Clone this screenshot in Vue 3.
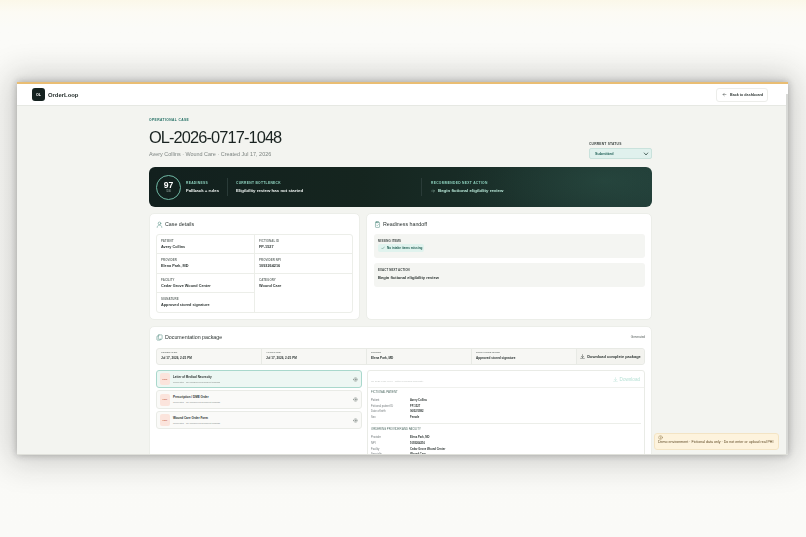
<template>
  <div class="stage">
    <div class="window">
      <header class="topbar">
        <div class="brand">
          <span class="logo">OL</span>
          <span class="brand-name">OrderLoop</span>
        </div>
        <button class="back-btn">
          <svg viewBox="0 0 24 24" class="ico-back"><path d="M19 12H5M11 6l-6 6 6 6" /></svg>
          Back to dashboard
        </button>
      </header>

      <main class="content">
        <div class="page-head">
          <div>
            <div class="eyebrow">OPERATIONAL CASE</div>
            <h1>OL-2026-0717-1048</h1>
            <p class="sub">Avery Collins · Wound Care · Created Jul 17, 2026</p>
          </div>
          <div class="status">
            <div class="status-label">CURRENT STATUS</div>
            <div class="status-select">
              <span>Submitted</span>
              <svg viewBox="0 0 24 24"><path d="M5 8l7 8 7-8" /></svg>
            </div>
          </div>
        </div>

        <section class="banner">
          <div class="score"><b>97</b><small>/100</small></div>
          <div class="b-col b-first">
            <div class="b-label">READINESS</div>
            <div class="b-value">Fallback + rules</div>
          </div>
          <div class="b-col b-mid">
            <div class="b-label">CURRENT BOTTLENECK</div>
            <div class="b-value">Eligibility review has not started</div>
          </div>
          <div class="b-col b-next">
            <div class="b-label">RECOMMENDED NEXT ACTION</div>
            <div class="b-value mint">
              <svg viewBox="0 0 24 24"><path d="M3 12h18M14 5l7 7-7 7" /></svg>
              Begin fictional eligibility review
            </div>
          </div>
        </section>

        <div class="two-col">
          <section class="card case-card">
            <h2>
              <svg viewBox="0 0 24 24" class="h-ico"><circle cx="12" cy="8" r="4.5" /><path d="M4 22c0-5 3.5-8 8-8s8 3 8 8" /></svg>
              Case details
            </h2>
            <div class="fields">
              <div v-for="f in fields" :key="f.label" class="field" :class="{ tall: f.tall }">
                <div class="f-label">{{ f.label }}</div>
                <div class="f-value">{{ f.value }}</div>
              </div>
            </div>
          </section>

          <section class="card handoff-card">
            <h2>
              <svg viewBox="0 0 24 24" class="h-ico"><rect x="5" y="4" width="14" height="18" rx="2" /><path d="M9 2h6v4H9zM9 14l2 2 4-4" /></svg>
              Readiness handoff
            </h2>
            <div class="hand-box">
              <div class="f-label dark">MISSING ITEMS</div>
              <div class="chip">
                <svg viewBox="0 0 24 24"><path d="M4 13l5 5L20 6" /></svg>
                No intake items missing
              </div>
            </div>
            <div class="hand-box">
              <div class="f-label dark">EXACT NEXT ACTION</div>
              <div class="f-value next">Begin fictional eligibility review</div>
            </div>
          </section>
        </div>

        <section class="card package">
          <div class="pack-head">
            <h2>
              <svg viewBox="0 0 24 24" class="h-ico"><rect x="8" y="3" width="13" height="15" rx="2" /><path d="M8 7H5a2 2 0 0 0-2 2v10a2 2 0 0 0 2 2h9a2 2 0 0 0 2-2v-1" /></svg>
              Documentation package
            </h2>
            <span class="generated">Generated</span>
          </div>

          <div class="meta">
            <div v-for="m in meta" :key="m.label" class="meta-cell">
              <div class="f-label">{{ m.label }}</div>
              <div class="meta-value">{{ m.value }}</div>
            </div>
            <button class="dl-all">
              <svg viewBox="0 0 24 24"><path d="M12 3v13M6 11l6 6 6-6M3 21h18" /></svg>
              Download complete package
            </button>
          </div>

          <div class="docs">
            <div class="doc-list">
              <div v-for="(d, i) in docs" :key="d" class="doc" :class="{ active: i === 0 }">
                <span class="pdf">PDF</span>
                <div class="doc-text">
                  <div class="doc-name">{{ d }}</div>
                  <div class="doc-sub">Generated · No unresolved document findings</div>
                </div>
                <svg viewBox="0 0 24 24" class="eye"><path d="M1 12s4-8 11-8 11 8 11 8-4 8-11 8-11-8-11-8z" /><circle cx="12" cy="12" r="3" /></svg>
              </div>
            </div>

            <div class="preview">
              <div class="prev-head">
                <span class="prev-title">OL-2026-0717-1048 · Letter of Medical Necessity</span>
                <span class="prev-dl">
                  <svg viewBox="0 0 24 24"><path d="M12 3v13M6 11l6 6 6-6M3 21h18" /></svg>
                  Download
                </span>
              </div>
              <div class="prev-body">
                <div class="prev-sec">FICTIONAL PATIENT</div>
                <div v-for="r in patientRows" :key="r[0]" class="prev-row">
                  <span>{{ r[0] }}</span><b>{{ r[1] }}</b>
                </div>
                <div class="prev-rule"></div>
                <div class="prev-sec">ORDERING PROVIDER AND FACILITY</div>
                <div v-for="r in providerRows" :key="r[0]" class="prev-row">
                  <span>{{ r[0] }}</span><b>{{ r[1] }}</b>
                </div>
              </div>
            </div>
          </div>
        </section>
      </main>

      <div class="scroll-track"></div>

      <div class="toast">
        <svg viewBox="0 0 24 24"><circle cx="12" cy="12" r="9" /><path d="M12 8v5M12 16v1" /></svg>
        <div>Demo environment · Fictional data only · Do not enter or upload real PHI</div>
      </div>
    </div>
  </div>
</template>

<script setup>
const fields = [
  { label: 'PATIENT', value: 'Avery Collins' },
  { label: 'FICTIONAL ID', value: 'FP-1527' },
  { label: 'PROVIDER', value: 'Elena Park, MD' },
  { label: 'PROVIDER NPI', value: '1093264216' },
  { label: 'FACILITY', value: 'Cedar Grove Wound Center' },
  { label: 'CATEGORY', value: 'Wound Care', tall: true },
  { label: 'SIGNATURE', value: 'Approved stored signature' }
]

const meta = [
  { label: 'GENERATED', value: 'Jul 17, 2026, 2:25 PM' },
  { label: 'APPROVED', value: 'Jul 17, 2026, 2:25 PM' },
  { label: 'SIGNER', value: 'Elena Park, MD' },
  { label: 'SIGNATURE MODE', value: 'Approved stored signature' }
]

const docs = ['Letter of Medical Necessity', 'Prescription / DME Order', 'Wound Care Order Form']

const patientRows = [
  ['Patient', 'Avery Collins'],
  ['Fictional patient ID', 'FP-1527'],
  ['Date of birth', '06/02/1982'],
  ['Sex', 'Female']
]

const providerRows = [
  ['Provider', 'Elena Park, MD'],
  ['NPI', '1093264216'],
  ['Facility', 'Cedar Grove Wound Center'],
  ['Specialty', 'Wound Care']
]
</script>

<style>
html, body { margin: 0; background: #fafaf7; }
</style>

<style scoped>
* { box-sizing: border-box; }
svg { fill: none; stroke: currentColor; stroke-width: 2; stroke-linecap: round; stroke-linejoin: round; display: block; flex: none; }

.stage {
  width: 806px;
  height: 537px;
  overflow: hidden;
  padding: 82px 18px 0 17px;
  background: linear-gradient(#fbf8e9 0, #fcfbf4 12px, #fbfbf8 28px, #fafaf7 100%);
  font-family: "Liberation Sans", Arial, sans-serif;
  color: #1a2321;
}
.window {
  position: relative;
  height: 373px;
  overflow: hidden;
  background: #f3f4f0;
  border-top: 2px solid #e9bd73;
  border-bottom: 1px solid #dfe0da;
  box-shadow: 0 0 7px rgba(20, 20, 20, 0.3), 0 0 30px 8px rgba(30, 30, 30, 0.2);
  filter: blur(0.35px);
}
.topbar {
  height: 22px;
  background: #fff;
  border-bottom: 1px solid #e6e8e3;
  display: flex;
  align-items: center;
  justify-content: space-between;
  padding: 0 20px 0 15px;
}
.brand { display: flex; align-items: center; gap: 3px; }
.logo {
  width: 13px;
  height: 13px;
  border-radius: 3px;
  background: #14211f;
  color: #fff;
  font-size: 3.6px;
  font-weight: 700;
  display: flex;
  align-items: center;
  justify-content: center;
}
.brand-name { font-size: 5.9px; font-weight: 700; color: #27302e; }
.back-btn {
  width: 52px;
  height: 14px;
  background: #fff;
  border: 1px solid #ecedea;
  border-radius: 3px;
  font: 700 3.7px "Liberation Sans", Arial, sans-serif;
  color: #333b39;
  display: flex;
  align-items: center;
  gap: 3px;
  padding: 0 0 0 5px;
}
.ico-back { width: 5px; height: 5px; }

.content { width: 503px; margin: 0 auto 0 132px; }
.page-head { display: flex; justify-content: space-between; align-items: flex-start; padding-top: 12px; height: 61px; }
.eyebrow { font-size: 3.3px; line-height: 4px; font-weight: 700; letter-spacing: 0.4px; color: #1f6d62; }
h1 { margin: 5px 0 0; font-size: 16.4px; font-weight: 400; letter-spacing: -0.9px; line-height: 20px; color: #1a2321; }
.sub { margin: 3px 0 0; font-size: 5.45px; line-height: 8px; color: #7d8481; }
.status { width: 63px; align-self: flex-end; margin-bottom: 8px; }
.status-label { font-size: 3.3px; font-weight: 700; letter-spacing: 0.2px; color: #3d4543; margin-bottom: 2px; }
.status-select {
  height: 11px;
  border: 1px solid #c9e2dc;
  border-radius: 2px;
  background: #e0f1ed;
  display: flex;
  align-items: center;
  justify-content: space-between;
  padding: 0 2px 0 5px;
  font-size: 3.8px;
  font-weight: 700;
  color: #1f5f55;
}
.status-select svg { width: 6px; height: 6px; stroke-width: 3; color: #28403b; }

.banner {
  height: 40px;
  border-radius: 6px;
  background:
    radial-gradient(ellipse 150px 60px at 455px 14px, rgba(58, 104, 90, 0.3) 0, rgba(58, 104, 90, 0.17) 40%, rgba(58, 104, 90, 0.05) 75%, rgba(58, 104, 90, 0) 100%),
    linear-gradient(90deg, #12201e 0, #15251f 42%, #1e3833 100%);
  display: flex;
  align-items: center;
  padding-left: 7px;
  color: #fff;
}
.score {
  width: 25px;
  height: 25px;
  border: 1px solid #6fb8a4;
  border-radius: 50%;
  display: flex;
  flex-direction: column;
  align-items: center;
  justify-content: center;
}
.score b { font-size: 8.6px; line-height: 9px; }
.score small { font-size: 2.6px; line-height: 3px; color: #a8b8b3; }
.b-col { height: 18px; display: flex; flex-direction: column; justify-content: center; gap: 3px; }
.b-first { width: 41px; margin-left: 5px; }
.b-mid { width: 194px; border-left: 1px solid #2a3b38; padding-left: 8px; }
.b-next { border-left: 1px solid #2a3b38; padding-left: 9px; }
.b-label { font-size: 3.3px; line-height: 4px; font-weight: 700; letter-spacing: 0.3px; color: #8fd3bf; }
.b-value { font-size: 4.4px; line-height: 6px; font-weight: 700; color: #f0f5f3; display: flex; align-items: center; gap: 3px; white-space: nowrap; }
.b-value.mint { color: #b8e8d8; }
.b-value svg { width: 4px; height: 4px; }

.two-col { display: grid; grid-template-columns: 211px 286px; gap: 6px; margin-top: 6px; }
.card {
  background: #fff;
  border: 1px solid #eceee9;
  border-radius: 5px;
  padding: 5px 6px 7px;
}
h2 {
  margin: 0;
  height: 10px;
  display: flex;
  align-items: center;
  gap: 2px;
  font-size: 5.3px;
  font-weight: 400;
  color: #2b3331;
}
.h-ico { width: 7px; height: 7px; color: #3f7f73; stroke-width: 1.6; }
.case-card { height: 107px; }
.handoff-card { height: 107px; padding-left: 7px; padding-right: 6px; }
.fields {
  margin-top: 5px;
  height: 79px;
  border: 1px solid #eceee9;
  border-radius: 3px;
  display: grid;
  grid-template-columns: 98px 1fr;
  grid-template-rows: repeat(4, 1fr);
}
.field { padding: 4px 4px 0; border-bottom: 1px solid #eceee9; }
.field:nth-child(odd) { border-right: 1px solid #eceee9; }
.field:last-child { border-bottom: 0; }
.field.tall { grid-row: span 2; border-bottom: 0; border-right: 0; }
.field:nth-child(7) { border-right: 1px solid #eceee9; }
.f-label { font-size: 2.9px; line-height: 4px; font-weight: 700; letter-spacing: 0.1px; color: #6c7471; }
.f-label.dark { color: #3e4644; }
.f-value { margin-top: 1px; font-size: 3.8px; line-height: 6px; font-weight: 700; color: #2b3331; }
.hand-box { margin-top: 5px; height: 24px; background: #f4f5f2; border-radius: 3px; padding: 5px 4px 0; }
.hand-box .f-value.next { margin-top: 3px; font-size: 4.1px; }
.chip {
  margin-top: 1px;
  width: 46px;
  height: 8px;
  background: #e0f3ee;
  border-radius: 2px;
  display: flex;
  align-items: center;
  gap: 2px;
  padding-left: 3px;
  font-size: 3.1px;
  font-weight: 700;
  color: #1c5b50;
  white-space: nowrap;
}
.chip svg { width: 4px; height: 4px; }

.package { margin-top: 6px; height: 200px; }
.pack-head { display: flex; justify-content: space-between; align-items: center; }
.generated { font-size: 3px; color: #59615e; }
.meta {
  margin-top: 6px;
  height: 17px;
  display: flex;
  border: 1px solid #e8eae5;
  border-radius: 3px;
  background: #f7f7f4;
}
.meta-cell { width: 105px; padding: 2px 4px 0; border-right: 1px solid #e8eae5; }
.meta .f-label { font-size: 2.5px; }
.meta-value { font-size: 3.1px; line-height: 6px; font-weight: 700; color: #2b3331; }
.dl-all {
  flex: 1;
  background: #f3f3ef;
  border: 0;
  border-radius: 0 3px 3px 0;
  display: flex;
  align-items: center;
  justify-content: center;
  gap: 2px;
  font: 700 3.9px "Liberation Sans", Arial, sans-serif;
  color: #2b3331;
  white-space: nowrap;
  padding: 0;
}
.dl-all svg { width: 5px; height: 5px; }

.docs { margin-top: 5px; display: grid; grid-template-columns: 206px 1fr; gap: 5px; }
.doc-list { display: flex; flex-direction: column; gap: 2.3px; }
.doc {
  height: 18.2px;
  border: 1px solid #e9ebe6;
  border-radius: 3px;
  background: #fafaf8;
  display: flex;
  align-items: center;
  padding: 0 3px;
  gap: 3px;
}
.doc.active { background: #edf7f3; border-color: #a9d8cc; }
.pdf {
  width: 10px;
  height: 12px;
  border-radius: 2px;
  background: #fbe4dc;
  color: #c2573d;
  font-size: 2.4px;
  font-weight: 700;
  display: flex;
  align-items: center;
  justify-content: center;
}
.doc-text { flex: 1; }
.doc-name { font-size: 3px; line-height: 5px; font-weight: 700; color: #2b3331; }
.doc-sub { font-size: 2.3px; line-height: 4px; color: #858c89; }
.eye { width: 5px; height: 5px; color: #55605c; }

.preview { height: 90px; border: 1px solid #e9ebe6; border-radius: 3px; background: #fff; overflow: hidden; }
.prev-head {
  height: 17px;
  display: flex;
  align-items: center;
  justify-content: space-between;
  padding: 0 4px 0 3px;
  border-bottom: 1px solid #f0f1ee;
}
.prev-title { font-size: 2.4px; color: #c4c8c5; margin-top: 4px; }
.prev-dl { display: flex; align-items: center; gap: 2px; font-size: 4.6px; color: #b8e2d6; }
.prev-dl svg { width: 5px; height: 5px; }
.prev-body { padding: 2px 3px; }
.prev-sec { font-size: 2.8px; line-height: 5px; color: #4e6a63; margin-bottom: 2.5px; }
.prev-row { display: flex; height: 5.8px; align-items: center; font-size: 2.7px; color: #71787a; }
.prev-row span { width: 39px; }
.prev-row b { color: #2b3331; }
.prev-rule { height: 1px; background: #eceee9; margin: 2px 0 3.5px; }

.scroll-track { position: absolute; top: 10px; right: 0; bottom: 0; width: 2px; background: #d8d9d6; }
.toast {
  position: absolute;
  left: 637px;
  top: 349px;
  width: 125px;
  height: 17px;
  background: #fdf3dd;
  border: 1px solid #f3e4c4;
  border-radius: 3px;
  padding: 1px 3px;
  font-size: 3.6px;
  line-height: 5px;
  color: #5f4a25;
  white-space: nowrap;
}
.toast svg { width: 5px; height: 5px; color: #8a7040; }
</style>
